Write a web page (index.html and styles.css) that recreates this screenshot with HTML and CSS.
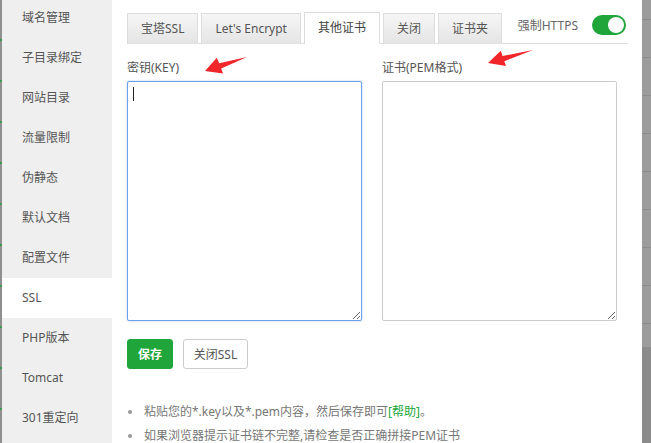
FILE: index.html
```html
<!DOCTYPE html>
<html lang="zh-CN">
<head>
  <meta charset="UTF-8">
  <meta name="viewport" content="width=device-width, initial-scale=1.0">
  <title>SSL</title>
  <link rel="stylesheet" href="styles.css">
</head>
<body>
  <div class="page">
    <div class="edge-left"></div>

    <ul class="side-menu">
      <li>域名管理</li>
      <li>子目录绑定</li>
      <li>网站目录</li>
      <li>流量限制</li>
      <li>伪静态</li>
      <li>默认文档</li>
      <li>配置文件</li>
      <li class="active">SSL</li>
      <li>PHP版本</li>
      <li>Tomcat</li>
      <li>301重定向</li>
    </ul>

    <div class="content">
      <div class="tab-bar">
        <span class="tab">宝塔SSL</span>
        <span class="tab">Let's Encrypt</span>
        <span class="tab on">其他证书</span>
        <span class="tab">关闭</span>
        <span class="tab">证书夹</span>
        <div class="force-https">
          <span>强制HTTPS</span>
          <span class="switch"><i></i></span>
        </div>
      </div>

      <div class="cert-boxes">
        <div class="cert-box">
          <label>密钥(KEY)</label>
          <textarea class="focused"></textarea>
          <span class="caret"></span>
        </div>
        <div class="cert-box">
          <label>证书(PEM格式)</label>
          <textarea></textarea>
        </div>
      </div>

      <div class="actions">
        <button class="btn btn-save">保存</button>
        <button class="btn btn-plain">关闭SSL</button>
      </div>

      <ul class="help-list">
        <li>粘贴您的*.key以及*.pem内容，然后保存即可<a href="#">[帮助]</a>。</li>
        <li>如果浏览器提示证书链不完整,请检查是否正确拼接PEM证书</li>
      </ul>
    </div>

    <div class="edge-right"></div>

    <!-- red annotation arrows drawn over the screenshot -->
    <svg class="arrows" width="651" height="443" viewBox="0 0 651 443">
      <polygon points="205,71 223,73.5 221.2,68.6 247,57 219.2,63.2 216.8,57.8" fill="#f0262a"/>
      <polygon points="488,63 506,66 504.3,61.2 533,50 502.5,56 500.8,50.8" fill="#f0262a"/>
    </svg>
  </div>
</body>
</html>
```

FILE: styles.css
```css
* {
  margin: 0;
  padding: 0;
  box-sizing: border-box;
}

body {
  font-family: "Noto Sans", "Noto Sans CJK SC", sans-serif;
  font-size: 12px;
  color: #555;
  background-color: #999;
  overflow: hidden;
}

.page {
  position: relative;
  display: flex;
  width: 651px;
  height: 443px;
  background-color: #fff;
}

.edge-left {
  width: 2px;
  flex: none;
  background-color: #8f8f8f;
  background-image: repeating-linear-gradient(to bottom, transparent 0, transparent 39px, #3f9a4f 39px, #3f9a4f 41px);
}

.edge-right {
  width: 9px;
  flex: none;
  background:
    linear-gradient(to bottom, transparent 0, transparent 347px, #8b8b8b 347px),
    repeating-linear-gradient(to bottom, #9c9c9c 0, #9c9c9c 18px, #8d8d8d 18px, #8d8d8d 19px, #9c9c9c 19px, #9c9c9c 38px);
  background-position: 0 0, 0 1px;
}

/* left menu */
.side-menu {
  list-style: none;
  width: 110px;
  flex: none;
  margin-top: -2px;
  background-color: #efefef;
}

.side-menu li {
  height: 40px;
  line-height: 40px;
  padding-left: 20px;
  color: #555;
}

.side-menu li.active {
  background-color: #fff;
}

/* right panel */
.content {
  flex: 1;
  padding: 13px 14px 0 15px;
}

.tab-bar {
  display: flex;
  align-items: flex-end;
  gap: 3px;
  height: 31px;
  border-bottom: 1px solid #ddd;
}

.tab {
  height: 31px;
  line-height: 30px;
  padding: 0 13px;
  border: 1px solid #ddd;
  border-bottom: none;
  background: linear-gradient(to bottom, #f6f6f6, #e4e4e4);
  color: #555;
  margin-bottom: -1px;
}

.tab.on {
  height: 32px;
  background: #fff;
  color: #444;
}

.force-https {
  display: flex;
  align-items: center;
  gap: 14px;
  margin-left: auto;
  margin-right: 2px;
  align-self: flex-start;
  margin-top: 2px;
  color: #666;
}

.switch {
  position: relative;
  width: 34px;
  height: 20px;
  border-radius: 10px;
  background-color: #20a53a;
}

.switch i {
  position: absolute;
  top: 2px;
  right: 2px;
  width: 16px;
  height: 16px;
  border-radius: 50%;
  background-color: #fff;
}

.cert-boxes {
  display: flex;
  gap: 20px;
  margin-top: 14px;
}

.cert-box {
  position: relative;
  display: flex;
  flex-direction: column;
}

.cert-box label {
  line-height: 20px;
  margin-bottom: 3px;
  color: #555;
}

.cert-box textarea {
  width: 235px;
  height: 240px;
  border: 1px solid #ccc;
  border-radius: 2px;
  resize: vertical;
  background: #fff;
  outline: none;
}

.cert-box textarea.focused {
  border-color: #6ba1e6;
  box-shadow: 0 0 2px rgba(80, 140, 230, 0.5);
}

.caret {
  position: absolute;
  left: 6px;
  top: 29px;
  width: 1px;
  height: 14px;
  background-color: #222;
}

.actions {
  display: flex;
  gap: 10px;
  margin-top: 18px;
}

.btn {
  height: 30px;
  padding: 0;
  border-radius: 3px;
  font-family: inherit;
  font-size: 12px;
  white-space: nowrap;
  cursor: pointer;
}

.btn-save {
  width: 46px;
  border: 1px solid #20a53a;
  background-color: #20a53a;
  color: #fff;
  font-weight: bold;
}

.btn-plain {
  width: 65px;
  border: 1px solid #ccc;
  background-color: #fff;
  color: #555;
}

.help-list {
  margin-top: 31px;
  list-style: none;
}

.help-list li {
  position: relative;
  line-height: 24px;
  padding-left: 17px;
  color: #777;
}

.help-list li::before {
  content: "";
  position: absolute;
  left: 1px;
  top: 10px;
  width: 4px;
  height: 4px;
  border-radius: 50%;
  background-color: #999;
}

.help-list a {
  color: #20a53a;
  text-decoration: none;
}

.arrows {
  position: absolute;
  left: 0;
  top: 0;
  pointer-events: none;
}
```
